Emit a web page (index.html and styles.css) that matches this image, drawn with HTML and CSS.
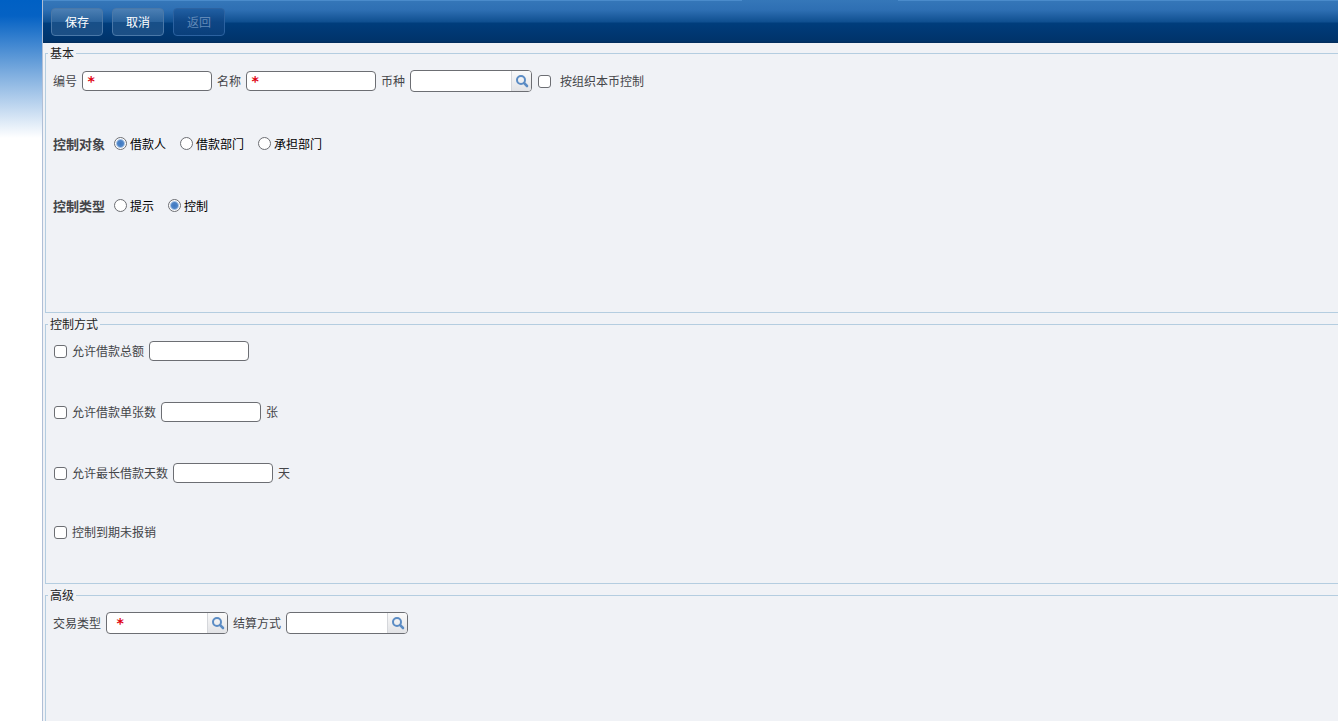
FILE: index.html
```html
<!DOCTYPE html>
<html lang="zh-CN">
<head>
    <meta charset="UTF-8">
    <meta name="viewport" content="width=device-width, initial-scale=1.0">
    <title>借款控制</title>
    <link rel="stylesheet" href="styles.css">
</head>
<body>
    <div class="side"></div>

    <form class="main">
        <div class="toolbar">
            <button type="button" class="btn">保存</button>
            <button type="button" class="btn">取消</button>
            <button type="button" class="btn" disabled>返回</button>
        </div>

        <div class="panels">
            <!-- 基本 -->
            <fieldset class="panel">
                <legend>基本</legend>
                <div class="rows">
                    <div class="row">
                        <label for="code">编号</label>
                        <span class="field">
                            <input type="text" id="code" class="text wide" required>
                            <span class="star">*</span>
                        </span>
                        <label for="name">名称</label>
                        <span class="field">
                            <input type="text" id="name" class="text wide" required>
                            <span class="star">*</span>
                        </span>
                        <label for="currency">币种</label>
                        <span class="lookup">
                            <input type="text" id="currency">
                            <button type="button" aria-label="币种">
                                <svg width="14" height="14" viewBox="0 0 14 14" fill="none">
                                    <circle cx="6" cy="6" r="4" stroke="#5b8cc4" stroke-width="2"/>
                                    <path d="M9.2 9.2L12 12" stroke="#5b8cc4" stroke-width="2.6" stroke-linecap="round"/>
                                </svg>
                            </button>
                        </span>
                        <label class="check far"><input type="checkbox">按组织本币控制</label>
                    </div>

                    <div class="row radios" role="radiogroup" aria-labelledby="target-title">
                        <span class="row-title" id="target-title">控制对象</span>
                        <label class="radio"><input type="radio" name="target" checked>借款人</label>
                        <label class="radio"><input type="radio" name="target">借款部门</label>
                        <label class="radio"><input type="radio" name="target">承担部门</label>
                    </div>

                    <div class="row radios" role="radiogroup" aria-labelledby="type-title">
                        <span class="row-title" id="type-title">控制类型</span>
                        <label class="radio"><input type="radio" name="type">提示</label>
                        <label class="radio"><input type="radio" name="type" checked>控制</label>
                    </div>
                </div>
            </fieldset>

            <!-- 控制方式 -->
            <fieldset class="panel">
                <legend>控制方式</legend>
                <div class="rows">
                    <div class="row">
                        <label class="check"><input type="checkbox">允许借款总额</label>
                        <input type="text" class="text" aria-label="允许借款总额">
                    </div>
                    <div class="row">
                        <label class="check"><input type="checkbox">允许借款单张数</label>
                        <input type="text" class="text" aria-label="允许借款单张数">
                        <span>张</span>
                    </div>
                    <div class="row">
                        <label class="check"><input type="checkbox">允许最长借款天数</label>
                        <input type="text" class="text" aria-label="允许最长借款天数">
                        <span>天</span>
                    </div>
                    <div class="row">
                        <label class="check"><input type="checkbox">控制到期未报销</label>
                    </div>
                </div>
            </fieldset>

            <!-- 高级 -->
            <fieldset class="panel last">
                <legend>高级</legend>
                <div class="rows">
                    <div class="row">
                        <label for="trade">交易类型</label>
                        <span class="lookup">
                            <input type="text" id="trade" required>
                            <span class="star">*</span>
                            <button type="button" aria-label="交易类型">
                                <svg width="14" height="14" viewBox="0 0 14 14" fill="none">
                                    <circle cx="6" cy="6" r="4" stroke="#5b8cc4" stroke-width="2"/>
                                    <path d="M9.2 9.2L12 12" stroke="#5b8cc4" stroke-width="2.6" stroke-linecap="round"/>
                                </svg>
                            </button>
                        </span>
                        <label for="settle">结算方式</label>
                        <span class="lookup">
                            <input type="text" id="settle">
                            <button type="button" aria-label="结算方式">
                                <svg width="14" height="14" viewBox="0 0 14 14" fill="none">
                                    <circle cx="6" cy="6" r="4" stroke="#5b8cc4" stroke-width="2"/>
                                    <path d="M9.2 9.2L12 12" stroke="#5b8cc4" stroke-width="2.6" stroke-linecap="round"/>
                                </svg>
                            </button>
                        </span>
                    </div>
                </div>
            </fieldset>
        </div>
    </form>
</body>
</html>
```

FILE: styles.css
```css
:root {
    --bg: #f0f2f6;
    --line: #b4cde0;
    --text: #444549;
    --input-border: #6c6e73;
}

* {
    margin: 0;
    padding: 0;
    box-sizing: border-box;
}

body, input, button {
    font-family: "Noto Sans CJK SC", sans-serif;
    font-size: 12px;
}

body {
    display: flex;
    min-height: 100vh;
    color: var(--text);
    background: #fff;
    line-height: 16px;
}

.side {
    width: 43px;
    border-right: 1px solid #b0bfd6;
    background: linear-gradient(#0060c4 0, #0562c4 16px, #7aabde 72px, #fff 138px);
}

.main {
    flex: 1;
    display: flex;
    flex-direction: column;
    background: var(--bg);
}

/* toolbar */
.toolbar {
    display: flex;
    align-items: center;
    gap: 9px;
    height: 43px;
    padding: 0 8px;
    background:
        linear-gradient(90deg, #4a8bcb 54%, transparent 54%, transparent 66%, #4a8bcb 66%) top / 100% 1px no-repeat,
        linear-gradient(#3577b9 0, #2e6fb3 10px, #0f4f90 22px, #003d7c 23px, #00336a 41px, #032c5a 43px);
}

.btn {
    width: 52px;
    height: 28px;
    border: 1px solid #4a78a8;
    border-radius: 4px;
    background: linear-gradient(#4b7fb4, #2b639c 50%, #174f88 51%, #1c4f85);
    color: #fff;
    cursor: pointer;
}

.btn:disabled {
    border-color: #2c62a0;
    background: linear-gradient(#215fa3, #0e4685 50%, #0a3f7b);
    color: #6189b8;
    cursor: default;
}

/* panels */
.panels {
    flex: 1;
    display: flex;
    flex-direction: column;
    gap: 4px;
    padding: 3px 0 0 2px;
}

.panel {
    min-height: 267px;
    border: 1px solid var(--line);
    border-right: none;
}

.panel.last {
    flex: 1;
    min-height: 0;
    border-bottom: none;
}

legend {
    margin-left: 2px;
    padding: 0 2px;
    line-height: 14px;
    color: #222;
}

.rows {
    display: flex;
    flex-direction: column;
    gap: 41px;
    padding: 10px 7px;
}

.row {
    display: flex;
    align-items: center;
    gap: 5px;
}

/* inputs */
.field {
    position: relative;
    display: flex;
}

.text {
    width: 100px;
    height: 20px;
    padding: 0 4px;
    border: 1px solid var(--input-border);
    border-radius: 4px;
    background: #fff;
}

.text.wide {
    width: 130px;
    padding-left: 16px;
}

.star {
    position: absolute;
    top: 2px;
    left: 5px;
    font-family: "DejaVu Sans Mono", monospace;
    font-size: 14px;
    font-weight: bold;
    color: #e00010;
    pointer-events: none;
}

.lookup {
    position: relative;
    display: flex;
    width: 122px;
    height: 22px;
    border: 1px solid var(--input-border);
    border-radius: 4px;
    background: #fff;
    overflow: hidden;
}

.lookup input {
    flex: 1;
    min-width: 0;
    padding: 0 4px;
    border: none;
    background: none;
}

.lookup button {
    display: flex;
    align-items: center;
    justify-content: center;
    width: 20px;
    border: none;
    border-left: 1px solid #d5d7db;
    background: linear-gradient(#fafafa, #e2e3e6);
    cursor: pointer;
}

.lookup .star {
    left: 9px;
}

/* checkboxes and radios */
.check, .radio {
    display: flex;
    align-items: center;
    gap: 5px;
}

.check input, .radio input {
    appearance: none;
    width: 13px;
    height: 13px;
    border: 1px solid var(--input-border);
    background: #fff;
}

.check input {
    margin-left: 1px;
    border-radius: 3px;
}

.check input:checked {
    background: #3f78c0;
}

.check.far {
    gap: 9px;
}

.radios {
    gap: 14px;
    min-height: 21px;
}

.row-title {
    margin-right: -5px;
    font-size: 13px;
    font-weight: bold;
}

.radio {
    gap: 3px;
    color: #000;
}

.radio input {
    border-radius: 50%;
}

.radio input:checked {
    background: radial-gradient(circle, #3f78c0 0, #4f86c8 3px, #fff 5px);
}
```
